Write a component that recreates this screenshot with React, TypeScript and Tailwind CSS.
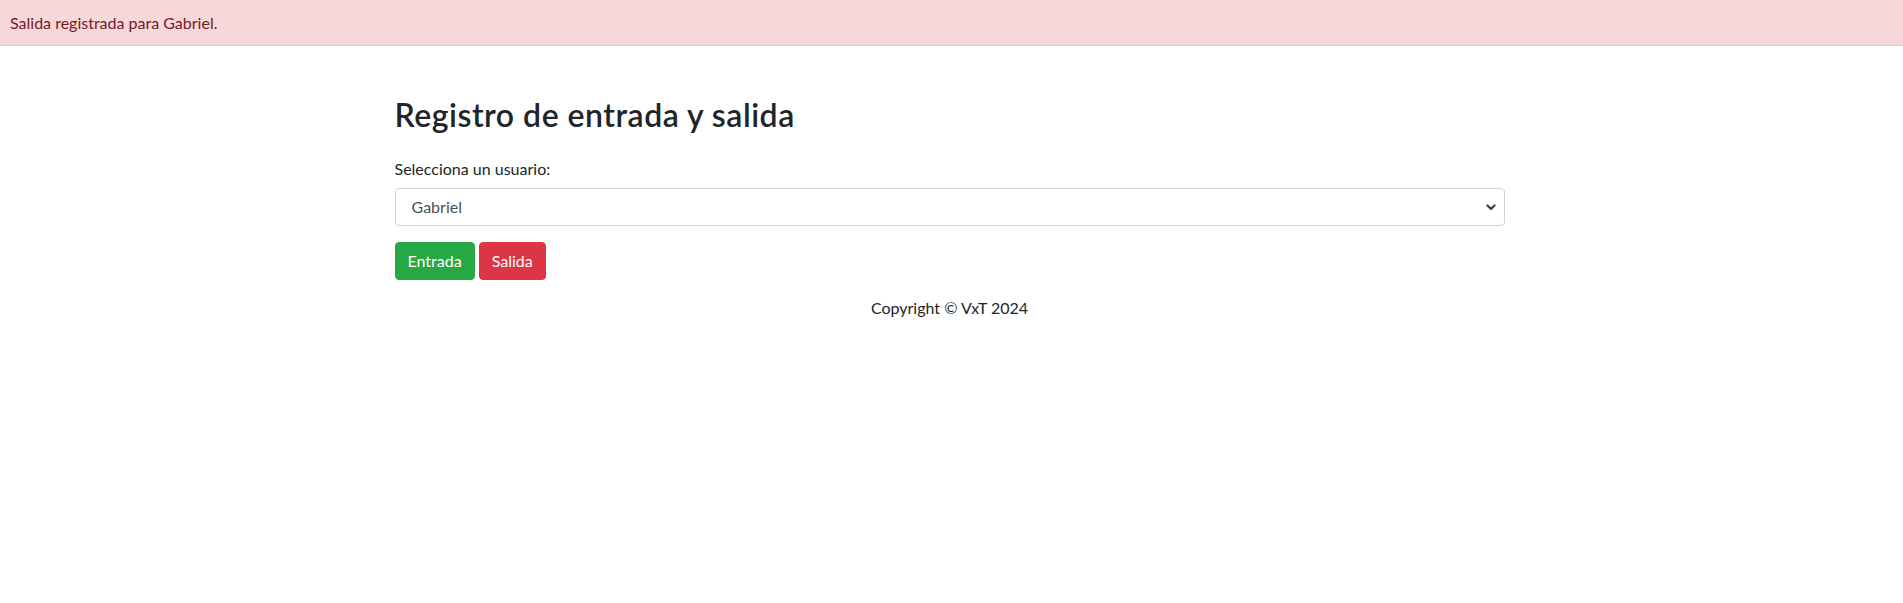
import { useState } from "react"

const font = "font-['Segoe_UI','Lato','Liberation_Sans',sans-serif]"

export default function App() {
  const [user, setUser] = useState("Gabriel")
  const [message, setMessage] = useState("Salida registrada para Gabriel.")

  return (
    <div className={`min-h-[603px] bg-white text-[16px] leading-6 text-[#212529] ${font}`}>
      {message && (
        <div className="border-b border-[#f5c6cb] bg-[#f8d7da] px-2.5 pt-[11px] pb-2.5 text-[#721c24]">
          {message}
        </div>
      )}

      <div className="mx-auto mt-[50px] max-w-[1144px] pl-[15px] pr-[19px]">
        <h2 className="mb-[23px] text-[32px] font-semibold leading-[38px] tracking-[0.5px]">Registro de entrada y salida</h2>

        <label htmlFor="usuario" className="mb-[7px] block">Selecciona un usuario:</label>
        <div className="relative mb-4">
          <select
            id="usuario"
            value={user}
            onChange={(e) => setUser(e.target.value)}
            className="block h-[38px] w-full appearance-none rounded border border-[#ced4da] bg-white pl-4 pr-8 text-[#495057] outline-none"
          >
            <option>Gabriel</option>
            <option>Valeria</option>
            <option>Tomás</option>
          </select>
          <svg
            className="pointer-events-none absolute right-[9px] top-1/2 h-[10px] w-[10px] -translate-y-1/2 text-[#3c4043]"
            viewBox="0 0 10 10"
            fill="none"
            stroke="currentColor"
            strokeWidth="2.2"
            strokeLinecap="round"
            strokeLinejoin="round"
          >
            <path d="M1.5 3.5 5 7l3.5-3.5" />
          </svg>
        </div>

        <div className="flex gap-1">
          <button
            onClick={() => setMessage(`Entrada registrada para ${user}.`)}
            className="h-[38px] rounded border border-[#28a745] bg-[#28a745] px-3 text-white"
          >
            Entrada
          </button>
          <button
            onClick={() => setMessage(`Salida registrada para ${user}.`)}
            className="h-[38px] rounded border border-[#dc3545] bg-[#dc3545] px-3 text-white"
          >
            Salida
          </button>
        </div>

        <p className="mt-4 text-center">Copyright © VxT 2024</p>
      </div>
    </div>
  )
}
